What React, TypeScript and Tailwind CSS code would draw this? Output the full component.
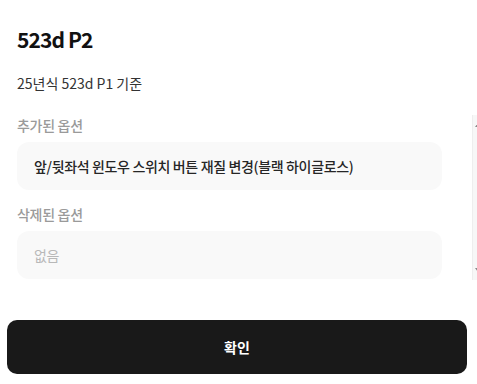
import React from 'react';

const font = { fontFamily: '"Noto Sans CJK KR", "Noto Sans", sans-serif' };

function Field({ label, value, empty }: { label: string; value?: string; empty?: boolean }) {
  return (
    <div className="flex flex-col gap-[7px]">
      <div className="text-[14px] leading-[20px] font-medium tracking-[-0.3px] text-[#9a9a9a]">{label}</div>
      <div className="h-[48px] w-[425px] rounded-[12px] bg-[#f9f9f9] px-[17px] flex items-center">
        <span
          className={
            empty
              ? 'text-[14px] tracking-[-0.3px] text-[#b8b8b8]'
              : 'text-[14px] font-medium tracking-[-0.35px] text-[#262626]'
          }
        >
          {value}
        </span>
      </div>
    </div>
  );
}

export default function App() {
  return (
    <div className="relative flex h-[384px] w-[477px] flex-col overflow-hidden bg-white" style={font}>
      <div className="flex flex-col px-[17px] pt-[24px]">
        <h1 className="text-[21px] leading-[30px] font-bold tracking-[-0.9px] text-[#111111]">523d P2</h1>
        <p className="mt-[19px] text-[14px] leading-[20px] text-[#333333]">25년식 523d P1 기준</p>
        <div className="mt-[22px] flex flex-col gap-[14px]">
          <Field label="추가된 옵션" value="앞/뒷좌석 윈도우 스위치 버튼 재질 변경(블랙 하이글로스)" />
          <Field label="삭제된 옵션" value="없음" empty />
        </div>
      </div>

      {/* clipped scrollbar of the panel */}
      <div className="absolute left-[472px] top-[115px] h-[165px] w-[6px] bg-[#f7f7f7] border-l border-[#eeeeee]">
        <div className="absolute left-[2px] top-[8px] h-0 w-0 border-x-[3px] border-b-[4px] border-x-transparent border-b-[#8a8a8a]" />
        <div className="absolute left-[2px] bottom-[8px] h-0 w-0 border-x-[3px] border-t-[4px] border-x-transparent border-t-[#8a8a8a]" />
      </div>

      <div className="mt-auto px-[7px] pb-[10px]">
        <button className="h-[54px] w-[460px] rounded-[10px] bg-[#191919] text-[14px] font-bold text-white">
          확인
        </button>
      </div>
    </div>
  );
}
